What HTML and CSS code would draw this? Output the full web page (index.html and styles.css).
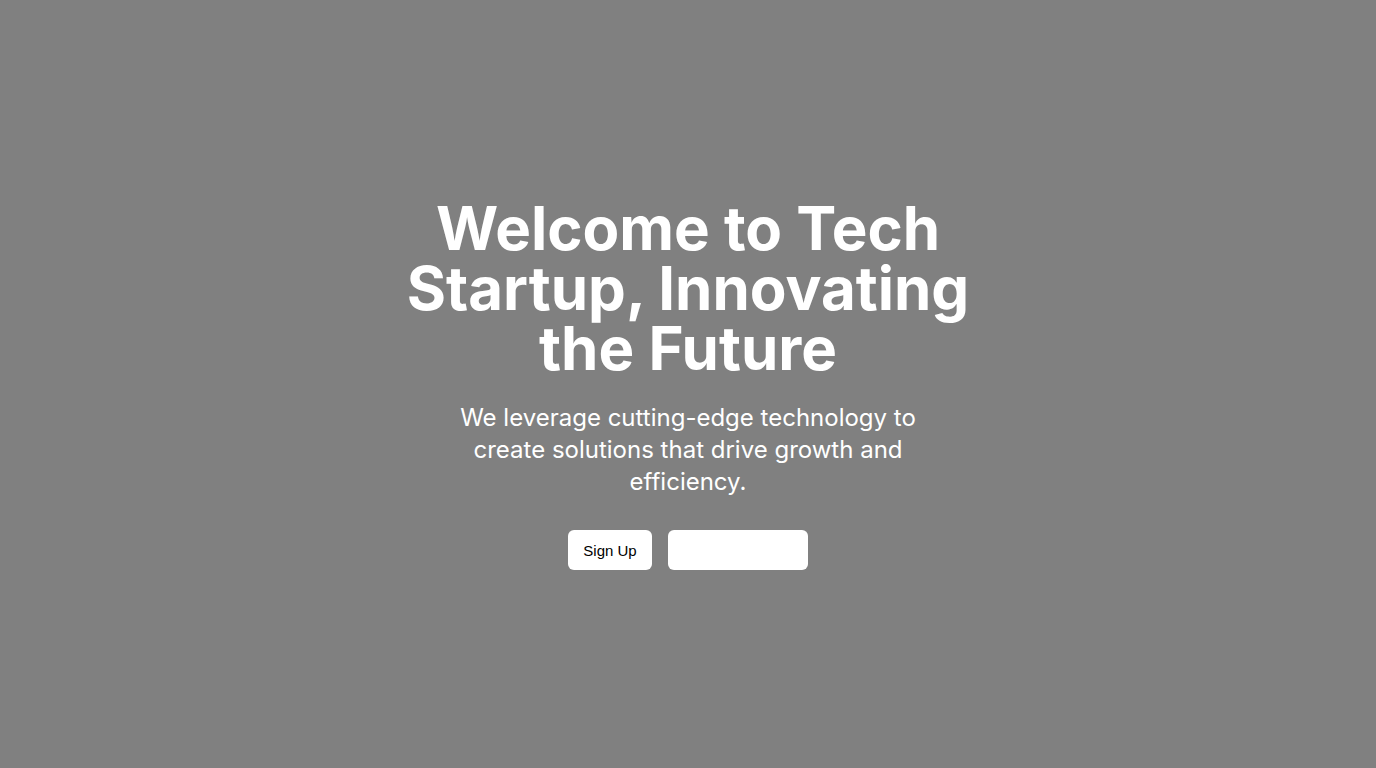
FILE: index.html
```html
<!DOCTYPE html>
<html lang="en">
<head>
<meta charset="utf-8">
<title>Tech Startup</title>
<link rel="stylesheet" href="styles.css">
</head>
<body>
<main class="hero">
  <div class="hero-inner">
    <h1 class="hero-title">Welcome to Tech Startup, Innovating the Future</h1>
    <p class="hero-text">We leverage cutting-edge technology to create solutions that drive growth and efficiency.</p>
    <div class="hero-actions">
      <button class="btn btn-primary" type="button">Sign Up</button>
      <button class="btn btn-secondary" type="button" aria-label="Learn more"></button>
    </div>
  </div>
</main>
</body>
</html>
```
FILE: styles.css
```css
* { box-sizing: border-box; }
html, body { margin: 0; padding: 0; }
body {
  background: #808080;
  font-family: Inter, "Noto Sans", sans-serif;
  color: #fff;
}
.hero {
  min-height: 768px;
  display: flex;
  align-items: center;
  justify-content: center;
}
.hero-inner {
  width: 576px;
  display: flex;
  flex-direction: column;
  align-items: center;
  text-align: center;
}
.hero-title {
  margin: 0;
  font-size: 60px;
  line-height: 60px;
  font-weight: 700;
}
.hero-text {
  margin: 24px 0 0;
  max-width: 480px;
  font-size: 24px;
  line-height: 32px;
  font-weight: 400;
}
.hero-actions {
  margin-top: 32px;
  display: flex;
  gap: 16px;
}
.btn {
  height: 40px;
  border: none;
  border-radius: 6px;
  background: #fff;
  color: #000;
  font-family: "Liberation Sans", Arial, sans-serif;
  font-size: 15px;
  padding: 0;
  white-space: nowrap;
  cursor: pointer;
}
.btn-primary { width: 84px; }
.btn-secondary { width: 140px; }
```
